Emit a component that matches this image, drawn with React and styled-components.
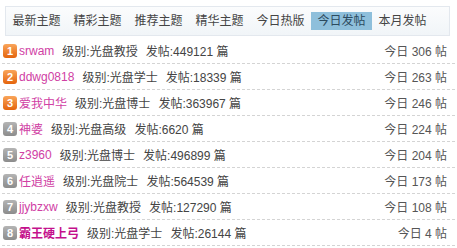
import React, { useState } from 'react';
import styled, { createGlobalStyle } from 'styled-components';

const tabs = ['最新主题', '精彩主题', '推荐主题', '精华主题', '今日热版', '今日发帖', '本月发帖'];

const posters = [
  { name: 'srwam', level: '光盘教授', total: 449121, today: 306 },
  { name: 'ddwg0818', level: '光盘学士', total: 18339, today: 263 },
  { name: '爱我中华', level: '光盘博士', total: 363967, today: 246 },
  { name: '神婆', level: '光盘高级', total: 6620, today: 224 },
  { name: 'z3960', level: '光盘博士', total: 496899, today: 204 },
  { name: '任逍遥', level: '光盘院士', total: 564539, today: 173 },
  { name: 'jjybzxw', level: '光盘教授', total: 127290, today: 108 },
  { name: '霸王硬上弓', level: '光盘学士', total: 26144, today: 4, strong: true },
];

const GlobalStyle = createGlobalStyle`
  body {
    margin: 0;
    background: #fff;
    font-family: "Liberation Sans", "Noto Sans CJK SC", sans-serif;
    font-size: 12px;
    color: #333;
  }
`;

const App = () => {
  const [activeTab, setActiveTab] = useState('今日发帖');

  return (
    <Wrapper>
      <GlobalStyle />
      <TabBar>
        {tabs.map((t) => (
          <Tab key={t} active={activeTab === t} onClick={() => setActiveTab(t)}>
            {t}
          </Tab>
        ))}
      </TabBar>
      <List>
        {posters.map((p, i) => (
          <Row key={p.name}>
            <Left>
              <Badge top={i < 3}>{i + 1}</Badge>
              <Name strong={p.strong}>{p.name}</Name>
              <Info>级别:{p.level}</Info>
              <Info>发帖:{p.total} 篇</Info>
            </Left>
            <Today>今日 {p.today} 帖</Today>
          </Row>
        ))}
      </List>
    </Wrapper>
  );
};

export default App;

const Wrapper = styled.div`
  width: 457px;
  height: 248px;
  overflow: hidden;
  padding-top: 6px;
  box-sizing: border-box;
`;

const TabBar = styled.div`
  display: flex;
  align-items: center;
  margin: 0 7px 0 5px;
  height: 28px;
  border: 1px solid #e3e8ee;
  background: linear-gradient(#fbfcfd, #f1f5f8);
`;

const Tab = styled.div`
  padding: 0 6.5px;
  height: 18px;
  line-height: 18px;
  cursor: pointer;
  color: ${(props) => (props.active ? '#2c4a5e' : '#444')};
  background: ${(props) => (props.active ? '#8ebfdb' : 'transparent')};
`;

const List = styled.div`
  margin: 2px 2px 0;
`;

const Row = styled.div`
  display: flex;
  align-items: center;
  justify-content: space-between;
  height: 26px;
  padding: 0 8px 0 1px;
  border-bottom: 1px dashed #d4d4d4;
  box-sizing: border-box;
`;

const Left = styled.div`
  display: flex;
  align-items: center;
`;

const Badge = styled.span`
  width: 14px;
  height: 14px;
  border-radius: 3px;
  margin-right: 2px;
  display: flex;
  align-items: center;
  justify-content: center;
  font: bold 11px "Liberation Sans", sans-serif;
  color: #fff;
  background: ${(props) =>
    props.top ? 'linear-gradient(#f9a55a, #e4640c)' : 'linear-gradient(#b4b4b4, #8c8c8c)'};
`;

const Name = styled.span`
  color: ${(props) => (props.strong ? '#c4108c' : '#d040a4')};
  font-weight: ${(props) => (props.strong ? 'bold' : 'normal')};
  margin-right: 8px;
`;

const Info = styled.span`
  color: #444;
  margin-right: 8px;
`;

const Today = styled.span`
  color: #555;
`;
